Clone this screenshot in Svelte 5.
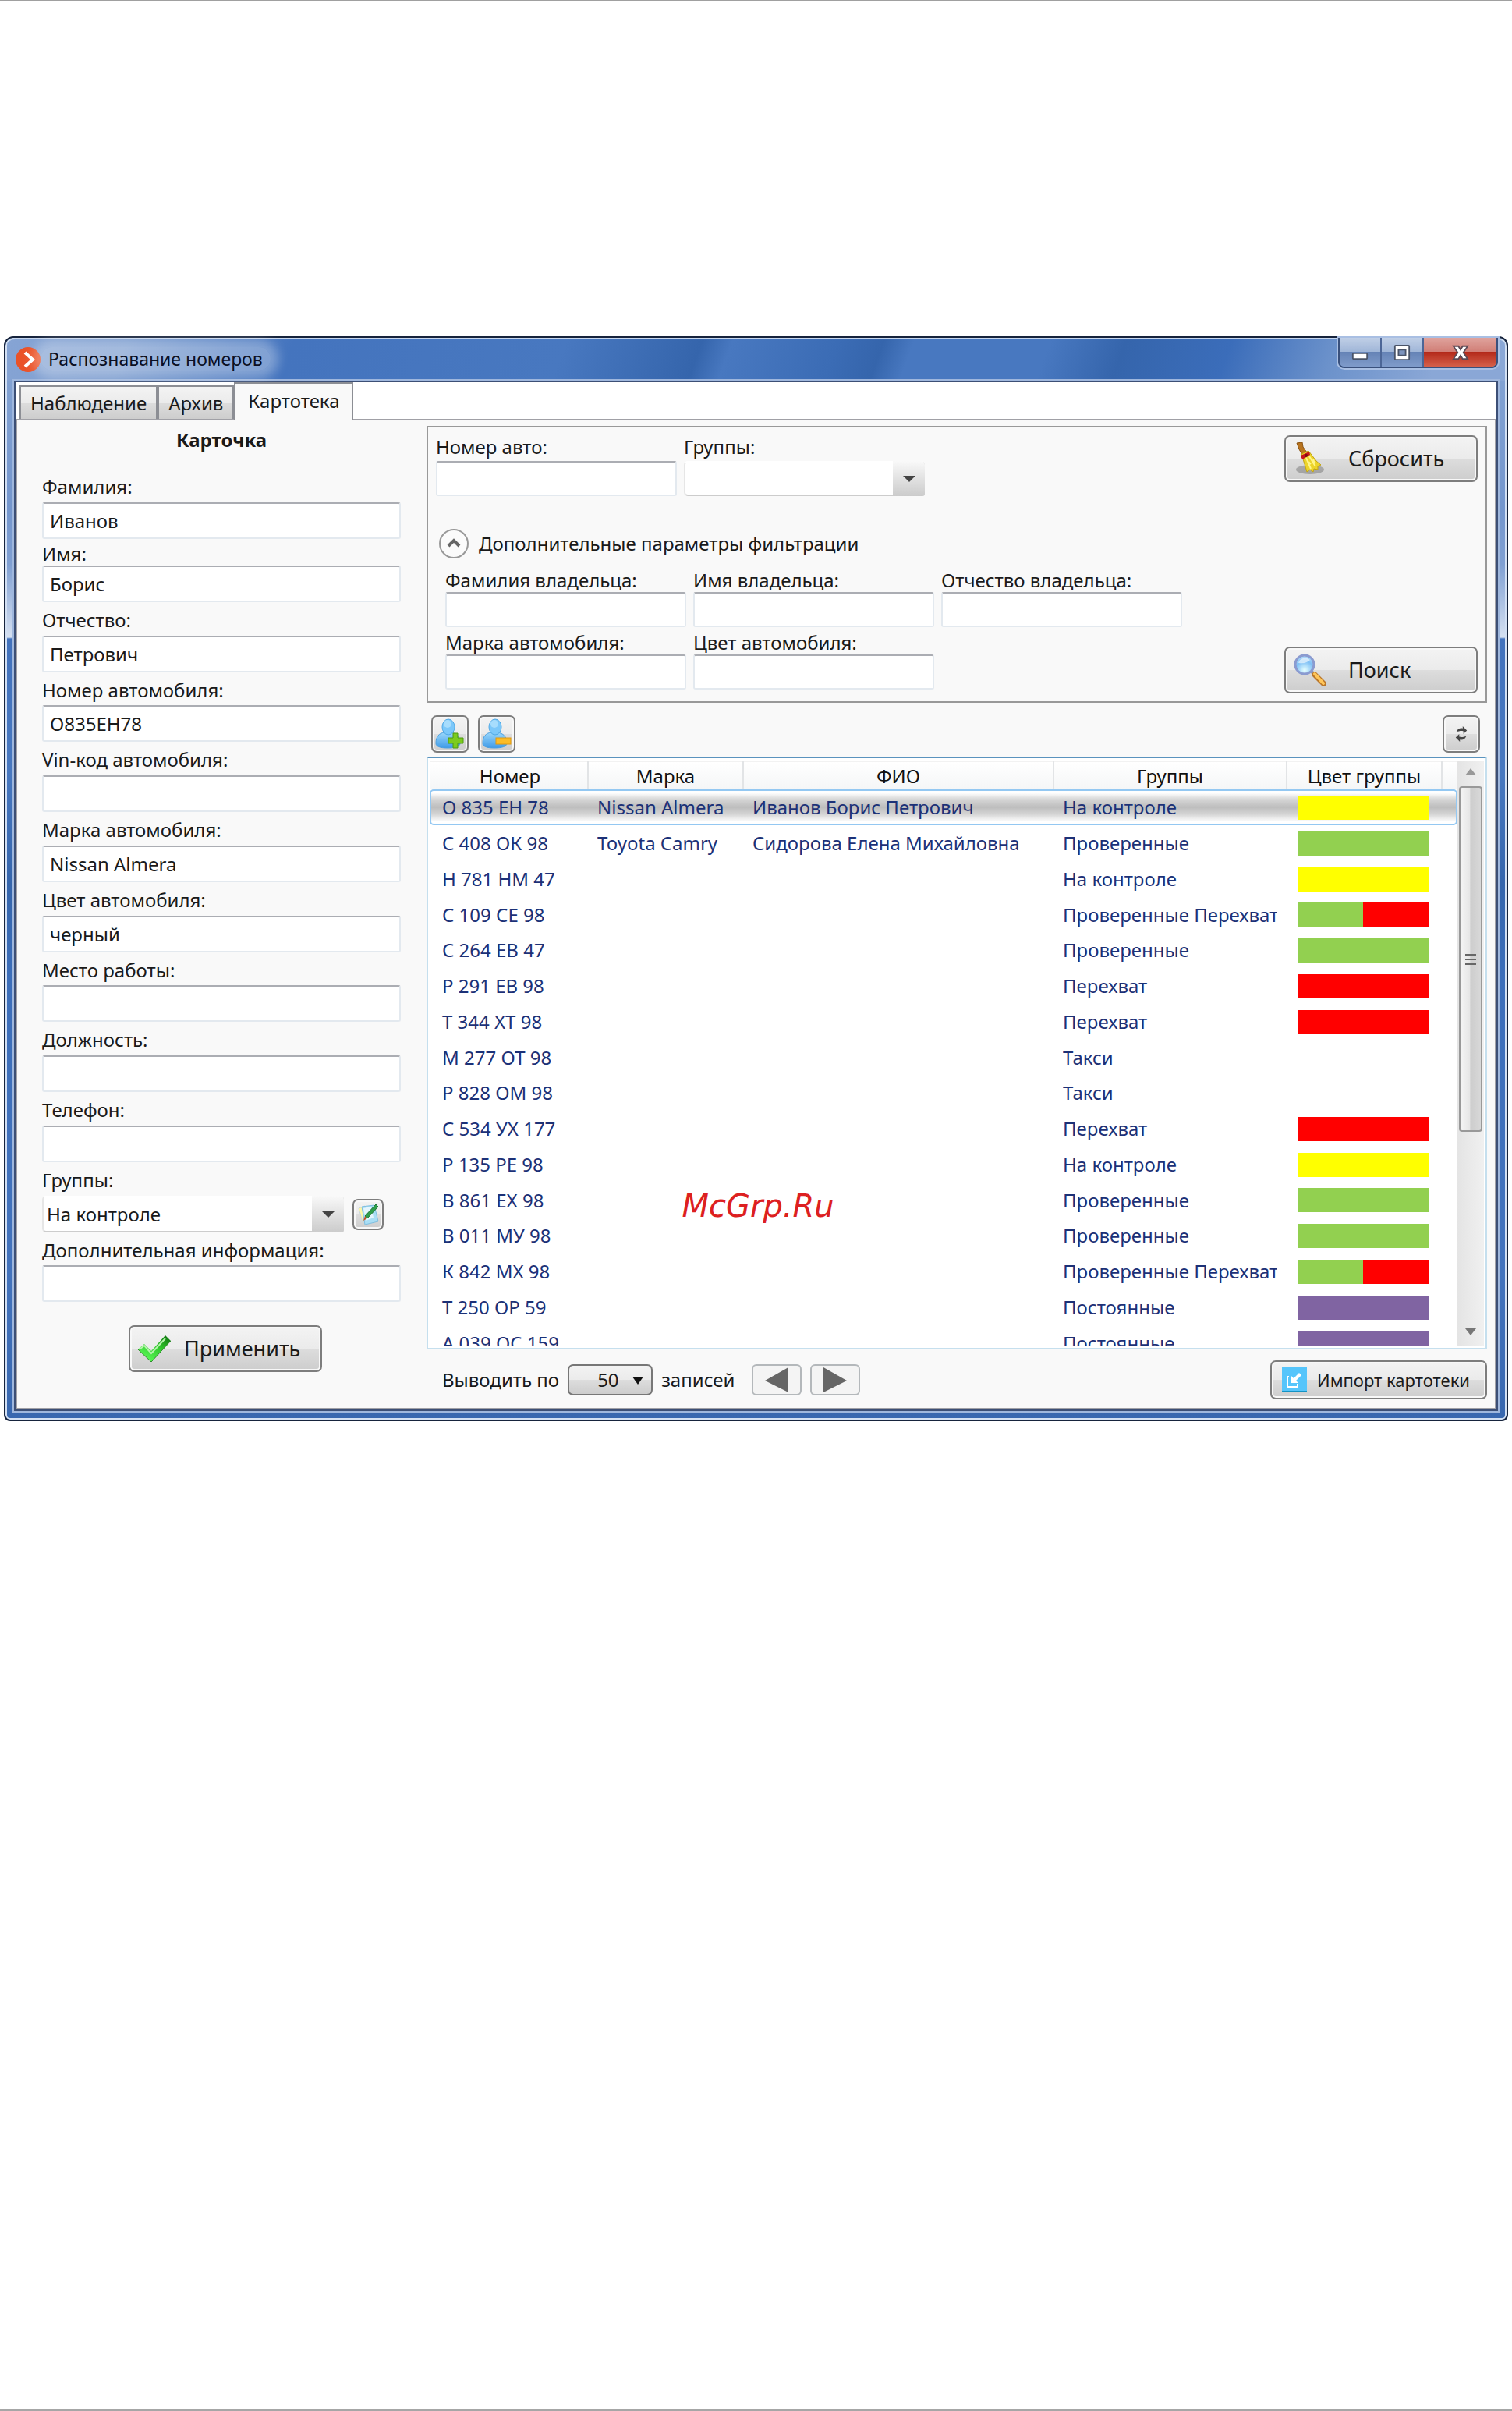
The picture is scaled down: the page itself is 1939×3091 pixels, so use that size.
<script lang="ts">
const tabs = ["Наблюдение", "Архив", "Картотека"];
let activeTab = $state("Картотека");

const card = $state([
	{ id: "surname", label: "Фамилия:", value: "Иванов" },
	{ id: "name", label: "Имя:", value: "Борис" },
	{ id: "patronymic", label: "Отчество:", value: "Петрович" },
	{ id: "plate", label: "Номер автомобиля:", value: "О835ЕН78" },
	{ id: "vin", label: "Vin-код автомобиля:", value: "" },
	{ id: "brand", label: "Марка автомобиля:", value: "Nissan Almera" },
	{ id: "color", label: "Цвет автомобиля:", value: "черный" },
	{ id: "work", label: "Место работы:", value: "" },
	{ id: "position", label: "Должность:", value: "" },
	{ id: "phone", label: "Телефон:", value: "" },
]);

const ownerFilters = [
	{ id: "f-surname", label: "Фамилия владельца:" },
	{ id: "f-name", label: "Имя владельца:" },
	{ id: "f-patronymic", label: "Отчество владельца:" },
	{ id: "f-brand", label: "Марка автомобиля:" },
	{ id: "f-color", label: "Цвет автомобиля:" },
];

const groupColors: Record<string, string> = {
	"На контроле": "#ffff00",
	"Проверенные": "#92d050",
	"Перехват": "#ff0000",
	"Постоянные": "#8064a2",
};

const rows = [
	{ plate: "О 835 ЕН 78", brand: "Nissan Almera", owner: "Иванов Борис Петрович", groups: ["На контроле"] },
	{ plate: "С 408 ОК 98", brand: "Toyota Camry", owner: "Сидорова Елена Михайловна", groups: ["Проверенные"] },
	{ plate: "Н 781 НМ 47", brand: "", owner: "", groups: ["На контроле"] },
	{ plate: "С 109 СЕ 98", brand: "", owner: "", groups: ["Проверенные", "Перехват"] },
	{ plate: "С 264 ЕВ 47", brand: "", owner: "", groups: ["Проверенные"] },
	{ plate: "Р 291 ЕВ 98", brand: "", owner: "", groups: ["Перехват"] },
	{ plate: "Т 344 ХТ 98", brand: "", owner: "", groups: ["Перехват"] },
	{ plate: "М 277 ОТ 98", brand: "", owner: "", groups: ["Такси"] },
	{ plate: "Р 828 ОМ 98", brand: "", owner: "", groups: ["Такси"] },
	{ plate: "С 534 УХ 177", brand: "", owner: "", groups: ["Перехват"] },
	{ plate: "Р 135 РЕ 98", brand: "", owner: "", groups: ["На контроле"] },
	{ plate: "В 861 ЕХ 98", brand: "", owner: "", groups: ["Проверенные"] },
	{ plate: "В 011 МУ 98", brand: "", owner: "", groups: ["Проверенные"] },
	{ plate: "К 842 МХ 98", brand: "", owner: "", groups: ["Проверенные", "Перехват"] },
	{ plate: "Т 250 ОР 59", brand: "", owner: "", groups: ["Постоянные"] },
	{ plate: "А 039 ОС 159", brand: "", owner: "", groups: ["Постоянные"] },
];

let selected = $state(0);
</script>

<div class="page">
	<div class="window">
		<header class="titlebar">
			<svg class="app-icon" viewBox="0 0 32 32">
				<circle cx="16" cy="16" r="16" fill="#ea5228" />
				<path d="M12 7l10 9-10 9" fill="none" stroke="#fff" stroke-width="4" />
			</svg>
			<span class="title">Распознавание номеров</span>
			<div class="controls">
				<button class="ctl min" aria-label="Свернуть">
					<svg viewBox="0 0 24 24"><rect x="2" y="13" width="20" height="8" rx="1" fill="#fff" stroke="#4a5468" stroke-width="2" /></svg>
				</button>
				<button class="ctl max" aria-label="Развернуть">
					<svg viewBox="0 0 24 24">
						<rect x="2" y="2" width="20" height="20" rx="1" fill="#fff" stroke="#4a5468" stroke-width="2" />
						<rect x="7" y="8" width="10" height="8" fill="#7d94bd" stroke="#4a5468" stroke-width="2" />
					</svg>
				</button>
				<button class="ctl close" aria-label="Закрыть">
					<svg viewBox="0 0 24 24"><path d="M2 3h7l3 5 3-5h7l-6 9 6 9h-7l-3-5-3 5H2l6-9z" fill="#fff" stroke="#5d4a55" stroke-width="2" /></svg>
				</button>
			</div>
		</header>

		<div class="client">
			<nav class="tabs">
				{#each tabs as tab}
					<button class="tab" class:active={tab === activeTab} onclick={() => (activeTab = tab)}>{tab}</button>
				{/each}
			</nav>

			<main class="panel">
				<form class="card" onsubmit={(e) => e.preventDefault()}>
					<h2>Карточка</h2>
					{#each card as field}
						<div class="field">
							<label for={field.id}>{field.label}</label>
							<input id={field.id} type="text" bind:value={field.value} />
						</div>
					{/each}
					<div class="field">
						<label for="card-group">Группы:</label>
						<div class="group-row">
							<div class="combo">
								<select id="card-group">
									<option>На контроле</option>
									<option>Проверенные</option>
									<option>Перехват</option>
								</select>
								<span class="drop"><svg viewBox="0 0 16 8"><path d="M0 0h16L8 8z" fill="#444" /></svg></span>
							</div>
							<button type="button" class="btn edit" aria-label="Изменить группы">
								<svg viewBox="0 0 28 28">
									<path d="M2 6l8-3 4 18-7 3z" fill="#fdf6a8" stroke="#c9d7dd" />
									<path d="M6 4l16-2 5 21-17 4z" fill="#a9def5" stroke="#7fbfe0" />
									<path d="M8 6l10-2 3 14-10 4z" fill="#e4f5fd" />
									<path d="M24 1l3 3-14 15-3-3z" fill="#2f9e4b" stroke="#1e7434" />
									<path d="M10 16l3 3-5 3z" fill="#c0542c" />
								</svg>
							</button>
						</div>
					</div>
					<div class="field">
						<label for="info">Дополнительная информация:</label>
						<input id="info" type="text" />
					</div>
					<button class="btn big apply">
						<svg viewBox="0 0 42 34">
							<defs>
								<linearGradient id="tick" x1="1" y1="0" x2="0.3" y2="1">
									<stop offset="0" stop-color="#0b6a0b" />
									<stop offset="0.45" stop-color="#2fc52b" />
									<stop offset="1" stop-color="#5dfc5a" />
								</linearGradient>
							</defs>
							<path d="M0 18l8-7 9 9L35 0l7 7-25 27z" fill="url(#tick)" />
							<path d="M3 17l5-4 9 10L35 4" fill="none" stroke="#b5f3ac" stroke-width="2" />
							<path d="M0 18l17 16L42 7" fill="none" stroke="#2d8a2b" stroke-width="1" />
						</svg>
						Применить
					</button>
				</form>

				<section class="content">
					<div class="filters">
						<div class="filter-main">
							<div class="filter-top">
								<div class="field">
									<label for="f-plate">Номер авто:</label>
									<input id="f-plate" type="text" />
								</div>
								<div class="field">
									<label for="f-group">Группы:</label>
									<div class="combo">
										<select id="f-group"><option></option><option>На контроле</option></select>
										<span class="drop"><svg viewBox="0 0 16 8"><path d="M0 0h16L8 8z" fill="#444" /></svg></span>
									</div>
								</div>
							</div>
							<button class="expander">
								<svg viewBox="0 0 38 38">
									<circle cx="19" cy="19" r="18" fill="#fbfbfb" stroke="#999" stroke-width="2" />
									<path d="M12 22l7-7 7 7" fill="none" stroke="#666" stroke-width="4" />
								</svg>
								Дополнительные параметры фильтрации
							</button>
							<div class="filter-extra">
								{#each ownerFilters as f}
									<div class="field">
										<label for={f.id}>{f.label}</label>
										<input id={f.id} type="text" />
									</div>
								{/each}
							</div>
						</div>
						<div class="filter-actions">
							<button class="btn big">
								<svg viewBox="0 0 42 42">
									<ellipse cx="21" cy="35" rx="18" ry="6" fill="#000" opacity="0.22" />
									<path d="M4 1l7-1 1 6 5 7-6 3-4-7z" fill="#b87420" stroke="#8a5312" />
									<path d="M10 15l9-4 10 13 6 5-4 2v4l-5-1-1 4-4-3-4 3z" fill="#ecd42a" stroke="#c3a410" />
									<path d="M16 20l6 14M20 18l8 13M19 25l3 3M25 22l2 5" stroke="#fff58a" stroke-width="2" />
									<path d="M9 17l11-5 1 4-10 6z" fill="#c8141c" />
									<circle cx="16" cy="17" r="2" fill="#7a0c10" />
								</svg>
								Сбросить
							</button>
							<button class="btn big">
								<svg viewBox="0 0 42 42">
									<defs>
										<radialGradient id="lens" cx="0.5" cy="0.8" r="0.8">
											<stop offset="0" stop-color="#e6ffff" />
											<stop offset="0.6" stop-color="#7fc0f5" />
											<stop offset="1" stop-color="#b9defa" />
										</radialGradient>
									</defs>
									<path d="M22 22l6 6" stroke="#8c97b8" stroke-width="4" />
									<path d="M27 27l12 12" stroke="#b9762a" stroke-width="7" stroke-linecap="round" />
									<path d="M27 26l11 12" stroke="#ffc65a" stroke-width="4" stroke-linecap="round" />
									<circle cx="14" cy="14" r="12" fill="url(#lens)" stroke="#8b9bd0" stroke-width="3" />
									<path d="M6 12a9 9 0 0 1 15-4c-4 4-9 5-15 4z" fill="#fff" opacity="0.6" />
								</svg>
								Поиск
							</button>
						</div>
					</div>

					<div class="toolbar">
						{#each ["add", "remove"] as kind}
							<button class="btn tool" aria-label={kind === "add" ? "Добавить" : "Удалить"}>
								<svg viewBox="0 0 38 40">
									<defs>
										<linearGradient id="person-{kind}" x1="0" y1="0" x2="0" y2="1">
											<stop offset="0" stop-color="#9ad7fb" />
											<stop offset="1" stop-color="#3f9be8" />
										</linearGradient>
									</defs>
									<path d="M1 32c0-9 4-13 11-14h8c7 1 12 5 12 14 0 4-6 6-16 6S1 36 1 32z" fill="url(#person-{kind})" stroke="#4b9fdf" />
									<ellipse cx="17" cy="11" rx="8" ry="10" fill="#7cc8fa" stroke="#4fa9e6" />
									<ellipse cx="16" cy="7" rx="5" ry="5" fill="#b9e5fd" opacity="0.7" />
									{#if kind === "add"}
										<path d="M23 19h6v6h7v7h-7v6h-6v-6h-6v-7h6z" fill="#7ccb1e" stroke="#4c9a0e" />
									{:else}
										<rect x="18" y="25" width="19" height="8" fill="#fcbc25" stroke="#e09a10" />
									{/if}
								</svg>
							</button>
						{/each}
						<button class="btn tool refresh" aria-label="Обновить">
							<svg viewBox="0 0 20 24">
								<path d="M3 9c2-5 6-6 9-5V1l6 6-5 5V8c-4-1-6 0-10 1z" fill="#444" />
								<path d="M17 15c-2 5-6 6-9 5v3l-6-6 5-5v4c4 1 6 0 10-1z" fill="#444" />
							</svg>
						</button>
					</div>

					<div class="list">
						<div class="viewport">
							<table>
								<colgroup>
									<col class="c-plate" />
									<col class="c-brand" />
									<col />
									<col class="c-group" />
									<col class="c-color" />
									<col class="c-tail" />
								</colgroup>
								<thead>
									<tr><th>Номер</th><th>Марка</th><th>ФИО</th><th>Группы</th><th>Цвет группы</th><th></th></tr>
								</thead>
								<tbody>
									{#each rows as row, i}
										<tr class:selected={i === selected} onclick={() => (selected = i)}>
											<td>{row.plate}</td>
											<td>{row.brand}</td>
											<td>{row.owner}</td>
											<td><div class="clip">{row.groups.join(" ")}</div></td>
											<td class="colors">
												<div class="bar">
													{#each row.groups as g}
														<span style:background={groupColors[g] ?? "transparent"}></span>
													{/each}
												</div>
											</td>
											<td></td>
										</tr>
									{/each}
								</tbody>
							</table>
						</div>
						<div class="scrollbar">
							<svg class="arrow" viewBox="0 0 14 9"><path d="M7 0l7 9H0z" fill="#999" /></svg>
							<div class="thumb"><i></i><i></i><i></i></div>
							<svg class="arrow down" viewBox="0 0 14 9"><path d="M0 0h14L7 9z" fill="#777" /></svg>
						</div>
						<div class="watermark">McGrp.Ru</div>
					</div>

					<footer>
						<label for="per-page">Выводить по</label>
						<div class="pager">
							<select id="per-page"><option>50</option><option>100</option></select>
							<svg viewBox="0 0 14 10"><path d="M0 0h14L7 10z" fill="#111" /></svg>
						</div>
						<span>записей</span>
						<button class="page-btn prev" aria-label="Назад"><svg viewBox="0 0 30 32"><path d="M0 17L30 0v32z" fill="#666" /></svg></button>
						<button class="page-btn" aria-label="Вперёд"><svg viewBox="0 0 30 32"><path d="M30 17L0 0v32z" fill="#666" /></svg></button>
						<button class="btn import">
							<svg viewBox="0 0 32 32">
								<rect width="32" height="32" fill="#56c5fb" />
								<rect y="30" width="32" height="2" fill="#1593c4" />
								<path d="M9 12H7v13h13v-4" fill="none" stroke="#fff" stroke-width="2" />
								<path d="M12 11v9h9l-3-3 7-7-3-3-7 7z" fill="#fff" />
							</svg>
							Импорт картотеки
						</button>
					</footer>
				</section>
			</main>
		</div>
	</div>
</div>

<style>
	:global(body) {
		background: #fff;
	}

	.page {
		box-sizing: border-box;
		min-height: 100vh;
		padding: 430px 5px 0;
		border-top: 1px solid #a0a0a0;
		border-bottom: 2px solid #a6a6a6;
		font-family: "Noto Sans", "Open Sans", sans-serif;
		font-size: 24px;
		line-height: 30px;
		color: #1a1a1a;
	}

	.page * {
		box-sizing: border-box;
	}

	button,
	input,
	select {
		font: inherit;
		color: inherit;
		margin: 0;
	}

	.window {
		padding: 0 11px 11px;
		border: 2px solid #16233c;
		border-radius: 12px 12px 8px 8px;
		box-shadow: inset 0 0 0 2px #d3e0f3;
		background: linear-gradient(#86a5d4 0, #7496cd 220px, #7f9fd2 290px, #d5e0f1 384px, #4272bd 386px, #4878c0 560px, #3565ac 700px, #3c6eba 820px, #4373bd 1200px, #3867af 100%);
	}

	.titlebar {
		display: flex;
		align-items: flex-start;
		height: 55px;
		margin: 0 -9px;
		padding: 10px 9px 0 11px;
		border-top: 2px solid #c6d6ee;
		border-radius: 10px 10px 0 0;
		background: linear-gradient(110deg, #86a4d4 0, #7b9ccf 8%, #4474be 19%, #4878c0 37%, #3565ac 46%, #4878c0 48%, #3b6cb5 55%, #3565ac 58%, #4878c0 60%, #4878c0 69%, #3565ac 74%, #3b6dba 81%, #6c92cb 88%, #8aa7d6 95%);
	}

	.app-icon {
		width: 32px;
		height: 32px;
	}

	.title {
		padding: 0 10px;
		font-size: 23px;
		color: #0b0f22;
		border-radius: 16px;
		background: rgba(255, 255, 255, 0.3);
		box-shadow: 0 0 14px 10px rgba(255, 255, 255, 0.3);
	}

	.controls {
		display: flex;
		height: 39px;
		margin: -12px 0 0 auto;
		border: 2px solid #39507c;
		border-top: 0;
		border-radius: 0 0 8px 8px;
		box-shadow: 0 0 0 2px #a9bfe3;
		overflow: hidden;
	}

	.ctl {
		display: flex;
		align-items: center;
		justify-content: center;
		width: 54px;
		padding: 0;
		border: 0;
		border-right: 2px solid #4c6697;
		background: linear-gradient(#c0cfe6 0, #a0b6d8 48%, #6583b6 50%, #7f9bca 100%);
	}

	.ctl svg {
		width: 24px;
		height: 22px;
	}

	.ctl.close {
		width: 93px;
		border-right: 0;
		background: linear-gradient(#dfa39d 0, #d17f77 48%, #b3291a 50%, #d5604a 100%);
	}

	.client {
		border: 2px solid #3c4f76;
		background: #fff;
		box-shadow: 0 0 0 2px #9fb7dd;
	}

	.tabs {
		display: flex;
		align-items: flex-end;
		height: 47px;
		padding-left: 5px;
	}

	.tab {
		height: 43px;
		padding: 0 12px;
		border: 2px solid #8c8e94;
		border-bottom: 0;
		background: linear-gradient(#f3f3f3 0, #ebebeb 50%, #dddddd 50%, #cdcdcd 100%);
	}

	.tab.active {
		position: relative;
		height: 49px;
		margin-bottom: -2px;
		padding: 0 16px 4px;
		background: #f9f9f9;
	}

	.panel {
		display: flex;
		border: 2px solid #a0a0a6;
		background: #f9f9f9;
	}

	.card {
		display: flex;
		flex-direction: column;
		flex: none;
		width: 525px;
		padding: 10px 33px 0 32px;
	}

	h2 {
		margin: 0 0 30px;
		font-size: 24px;
		line-height: 30px;
		text-align: center;
	}

	.field {
		display: flex;
		flex-direction: column;
		gap: 5px;
		margin-bottom: 8px;
	}

	.card .field:nth-of-type(4n) {
		gap: 4px;
	}

	.card .field:nth-of-type(1) {
		margin-bottom: 4px;
	}

	.card .field:nth-of-type(2) {
		gap: 0;
	}

	input {
		width: 100%;
		height: 47px;
		padding: 0 8px;
		border: 2px solid #e3e9ef;
		border-top-color: #abadb3;
		border-radius: 3px;
		background: #fff;
	}

	.group-row {
		display: flex;
		align-items: center;
		gap: 11px;
	}

	.combo {
		position: relative;
		width: 387px;
		height: 47px;
	}

	.combo select {
		appearance: none;
		width: 100%;
		height: 100%;
		padding: 0 50px 0 4px;
		border: 2px solid #ccc;
		border-top-color: #fff;
		border-left-color: #e6e6e6;
		border-radius: 5px;
		background: #fff;
	}

	.drop {
		position: absolute;
		top: 0;
		right: 0;
		display: flex;
		align-items: center;
		justify-content: center;
		width: 41px;
		height: 100%;
		border-radius: 0 5px 3px 0;
		background: linear-gradient(#f9f9f9, #cbcbcb);
		pointer-events: none;
	}

	.drop svg {
		width: 16px;
		height: 8px;
	}

	.btn {
		display: flex;
		align-items: center;
		padding: 0;
		border: 2px solid #7d7d7d;
		border-radius: 7px;
		background: linear-gradient(#f3f3f3 0, #ebebeb 50%, #dddddd 50%, #cdcdcd 100%);
		box-shadow: inset 0 0 0 2px #f8f8f8;
	}

	.edit {
		justify-content: center;
		width: 40px;
		height: 40px;
	}

	.edit svg {
		width: 28px;
		height: 28px;
	}

	.big {
		gap: 28px;
		width: 248px;
		height: 60px;
		padding-left: 10px;
		font-size: 27px;
	}

	.big svg {
		width: 42px;
		height: 42px;
	}

	.apply {
		gap: 17px;
		margin: 22px 0 46px 111px;
	}

	.apply svg {
		height: 34px;
	}

	.content {
		flex: 1;
		min-width: 0;
		padding: 7px 10px 0 0;
	}

	.filters {
		display: flex;
		justify-content: space-between;
		height: 355px;
		padding: 10px;
		border: 2px solid #999;
	}

	.filter-top {
		display: flex;
		gap: 9px;
	}

	.filter-top .field {
		width: 309px;
		gap: 3px;
		margin: 0;
	}

	.filter-top .combo {
		width: 100%;
	}

	.filter-top input,
	.filter-extra input,
	.filter-top .combo {
		height: 45px;
	}

	.expander {
		display: flex;
		align-items: center;
		gap: 13px;
		margin: 42px 0 13px 4px;
		padding: 0;
		border: 0;
		background: none;
	}

	.expander svg {
		width: 38px;
		height: 38px;
	}

	.filter-extra {
		display: grid;
		grid-template-columns: repeat(3, 309px);
		gap: 5px 9px;
		margin-left: 12px;
	}

	.filter-extra .field {
		gap: 0;
		margin: 0;
	}

	.filter-actions {
		display: flex;
		flex-direction: column;
		justify-content: space-between;
	}

	.toolbar {
		display: flex;
		gap: 12px;
		padding: 16px 9px 5px 6px;
	}

	.tool {
		justify-content: center;
		width: 48px;
		height: 48px;
	}

	.tool svg {
		width: 38px;
		height: 40px;
	}

	.refresh {
		margin-left: auto;
	}

	.refresh svg {
		width: 18px;
		height: 22px;
	}

	.list {
		position: relative;
		display: flex;
		padding: 3px 2px 2px;
		border: 2px solid #c5dfee;
		border-top-color: #5a93be;
		background: #fff;
	}

	.viewport {
		flex: 1;
		height: 751px;
		overflow: hidden;
	}

	table {
		width: 100%;
		table-layout: fixed;
		border-collapse: collapse;
		color: #1c3177;
	}

	.c-plate {
		width: 203px;
	}

	.c-brand,
	.c-color {
		width: 199px;
	}

	.c-group {
		width: 299px;
	}

	.c-tail {
		width: 20px;
	}

	th {
		height: 36px;
		padding: 0;
		border-top: 2px solid #f2f2f2;
		border-right: 2px solid #e2e4e6;
		background: linear-gradient(#fff, #f5f6f7);
		color: #111;
		font-weight: normal;
	}

	th:first-child {
		padding-left: 4px;
	}

	th:last-child {
		border-right: 0;
	}

	td {
		height: 46px;
		padding: 0 12px;
		line-height: 34px;
		white-space: nowrap;
	}

	td:first-child {
		padding-left: 16px;
	}

	td.colors {
		padding-left: 14px;
	}

	tr:nth-child(4n) td {
		height: 45px;
	}

	.selected {
		background: linear-gradient(#fff 10%, #d6d6d6 28%, #bdbdbd 50%, #d6d6d6 70%, #fff 90%);
		outline: 2px solid #94c8f2;
		outline-offset: -2px;
		border-radius: 5px;
	}

	.clip {
		overflow: hidden;
	}

	.bar {
		display: flex;
		width: 168px;
		height: 31px;
	}

	.bar span {
		flex: 1;
	}

	.scrollbar {
		display: flex;
		flex-direction: column;
		align-items: center;
		width: 34px;
		padding: 10px 0 14px;
		background: linear-gradient(90deg, #e4e4e4, #f0f0f0);
	}

	.arrow {
		width: 14px;
		height: 9px;
	}

	.down {
		margin-top: auto;
	}

	.thumb {
		display: flex;
		flex-direction: column;
		align-items: center;
		justify-content: center;
		gap: 4px;
		width: 30px;
		height: 443px;
		margin-top: 14px;
		border: 2px solid #999;
		border-radius: 4px;
		background: linear-gradient(90deg, #f5f5f5 0, #e6e6e6 45%, #cdcdcd 50%, #d8d8d8 100%);
	}

	.thumb i {
		width: 14px;
		height: 2px;
		background: #666;
	}

	.watermark {
		position: absolute;
		top: 551px;
		left: 24%;
		font: italic 40px/46px "DejaVu Sans", sans-serif;
		color: #dd2020;
		pointer-events: none;
	}

	footer {
		display: flex;
		align-items: center;
		gap: 11px;
		padding: 14px 0 0 20px;
	}

	.pager {
		position: relative;
	}

	.pager select {
		appearance: none;
		width: 109px;
		height: 40px;
		padding: 0 0 0 36px;
		border: 2px solid #777;
		border-radius: 7px;
		background: linear-gradient(#f3f3f3 0, #ebebeb 50%, #dddddd 50%, #cdcdcd 100%);
	}

	.pager svg {
		position: absolute;
		top: 17px;
		right: 12px;
		width: 14px;
		height: 9px;
		pointer-events: none;
	}

	.page-btn {
		display: flex;
		align-items: center;
		justify-content: center;
		width: 64px;
		height: 40px;
		padding: 0;
		border: 2px solid #b4b8bb;
		border-radius: 6px;
		background: #f4f4f4;
	}

	.page-btn svg {
		width: 30px;
		height: 32px;
	}

	.prev {
		margin-left: 11px;
	}

	.import {
		gap: 13px;
		width: 278px;
		height: 50px;
		margin-left: auto;
		padding-left: 13px;
		font-size: 22px;
		white-space: nowrap;
	}

	.import svg {
		width: 32px;
		height: 32px;
	}
</style>
